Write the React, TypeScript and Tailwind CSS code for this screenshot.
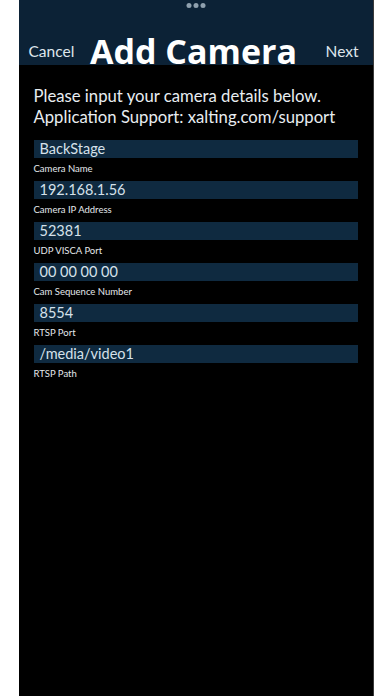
import React from "react";

const fields = [
  { value: "BackStage", label: "Camera Name" },
  { value: "192.168.1.56", label: "Camera IP Address" },
  { value: "52381", label: "UDP VISCA Port" },
  { value: "00 00 00 00", label: "Cam Sequence Number" },
  { value: "8554", label: "RTSP Port" },
  { value: "/media/video1", label: "RTSP Path" },
];

const font = { fontFamily: "Lato, 'Open Sans', sans-serif" };

export default function App() {
  return (
    <div className="w-full h-[696px] bg-white overflow-hidden" style={font}>
      <div className="mx-auto w-[355px] h-full bg-black border-r border-[#3a3a3a] flex flex-col">
        {/* Header */}
        <div className="relative h-[65px] bg-[#0c2236] shrink-0">
          <div className="absolute top-[3px] left-1/2 -translate-x-1/2 flex gap-[2px]">
            <span className="w-[5px] h-[5px] rounded-full bg-[#8fa0ae]" />
            <span className="w-[5px] h-[5px] rounded-full bg-[#8fa0ae]" />
            <span className="w-[5px] h-[5px] rounded-full bg-[#8fa0ae]" />
          </div>
          <div className="absolute inset-x-0 bottom-0 grid grid-cols-[1fr_auto_1fr] items-end pl-[10px] pr-[14px]">
            <span className="justify-self-start text-[15.5px] leading-none text-[#dfe6ec] mb-[6px]">
              Cancel
            </span>
            <span className="text-[34px] font-bold leading-none text-white mb-[-3px] font-['Open_Sans',sans-serif]">
              Add Camera
            </span>
            <span className="justify-self-end text-[15.5px] leading-none text-[#dfe6ec] mb-[6px]">
              Next
            </span>
          </div>
        </div>

        {/* Body */}
        <div className="px-[15px] pt-[21px]">
          <p className="text-[16.7px] leading-[21px] text-[#e8edf1]">
            Please input your camera details below.
            <br />
            Application Support: xalting.com/support
          </p>
          <div className="mt-[12px] flex flex-col gap-[6px]">
            {fields.map((f) => (
              <div key={f.label}>
                <div className="h-[18px] bg-[#0f2a40] px-[6px] text-[14.5px] leading-[18px] text-[#d6e1ea]">
                  {f.value}
                </div>
                <div className="mt-[4px] text-[9.5px] leading-[13px] text-[#e4e8ec]">
                  {f.label}
                </div>
              </div>
            ))}
          </div>
        </div>
      </div>
    </div>
  );
}
